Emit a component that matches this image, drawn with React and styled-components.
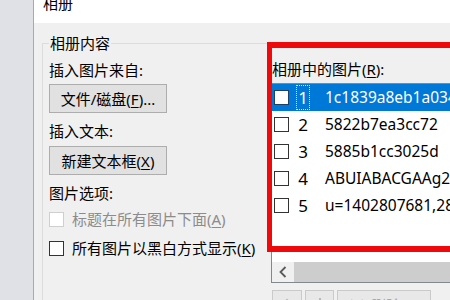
import React from "react";
import styled, { createGlobalStyle } from "styled-components";

const GlobalStyle = createGlobalStyle`
  html, body {
    margin: 0;
    padding: 0;
    background: #f0f0f0;
  }
  body {
    font-family: "Noto Sans", "Noto Sans CJK SC", sans-serif;
    color: #000;
  }
`;

const pictures = [
  "1c1839a8eb1a034c5b2",
  "5822b7ea3cc72",
  "5885b1cc3025d",
  "ABUIABACGAAg2",
  "u=1402807681,2844",
];

function Key({ children }) {
  return <Accel>{children}</Accel>;
}

function CheckRow({ label, disabled }) {
  return (
    <OptionRow $gap={disabled ? 8 : 11} $disabled={disabled}>
      <Box $disabled={disabled} />
      <span>{label}</span>
    </OptionRow>
  );
}

function PictureRow({ index, name, selected }) {
  return (
    <ListRow $selected={selected}>
      <RowBox $selected={selected} />
      <RowNumber $focused={selected}>{index}</RowNumber>
      <RowName>{name}</RowName>
    </ListRow>
  );
}

function App() {
  return (
    <>
      <GlobalStyle />
      <Screen>
        <Backdrop />
        <Dialog>
          <TitleBar>
            <Title>相册</Title>
          </TitleBar>
          <Body>
            <Group>
              <Legend>相册内容</Legend>
              <Columns>
                <LeftColumn>
                  <FieldLabel $gap={0}>插入图片来自:</FieldLabel>
                  <PushButton $gap={5}>
                    文件/磁盘(<Key>F</Key>)...
                  </PushButton>
                  <FieldLabel $gap={9}>插入文本:</FieldLabel>
                  <PushButton $gap={6}>
                    新建文本框(<Key>X</Key>)
                  </PushButton>
                  <FieldLabel $gap={9}>图片选项:</FieldLabel>
                  <CheckRow
                    disabled
                    label={<>标题在所有图片下面(<Key>A</Key>)</>}
                  />
                  <CheckRow label={<>所有图片以黑白方式显示(<Key>K</Key>)</>} />
                </LeftColumn>
                <RightColumn>
                  <ListLabel>
                    相册中的图片(<Key>R</Key>):
                  </ListLabel>
                  <ListBox>
                    <Rows>
                      {pictures.map((name, i) => (
                        <PictureRow
                          key={name}
                          index={i + 1}
                          name={name}
                          selected={i === 0}
                        />
                      ))}
                    </Rows>
                    <ScrollBar>
                      <ScrollArrow>
                        <svg width="8" height="12" viewBox="0 0 8 12">
                          <path
                            d="M6.5 1 L1.5 6 L6.5 11"
                            fill="none"
                            stroke="#5a5a5a"
                            strokeWidth="1.8"
                          />
                        </svg>
                      </ScrollArrow>
                      <ScrollThumb />
                    </ScrollBar>
                  </ListBox>
                  <ToolRow>
                    <ToolButton $width={30}>
                      <svg width="14" height="16" viewBox="0 0 14 16">
                        <path
                          d="M7 3 V15 M2 8 L7 3 L12 8"
                          fill="none"
                          stroke="#b9b9b9"
                          strokeWidth="2"
                        />
                      </svg>
                    </ToolButton>
                    <ToolButton $width={29}>
                      <svg width="14" height="16" viewBox="0 0 14 16">
                        <path
                          d="M7 1 V13 M2 8 L7 13 L12 8"
                          fill="none"
                          stroke="#b9b9b9"
                          strokeWidth="2"
                        />
                      </svg>
                    </ToolButton>
                    <ToolButton $width={94}>
                      <svg width="16" height="14" viewBox="0 0 16 14">
                        <path
                          d="M2 2 L14 12 M14 2 L2 12"
                          fill="none"
                          stroke="#b9b9b9"
                          strokeWidth="2.2"
                        />
                      </svg>
                      <span>删除(V)</span>
                    </ToolButton>
                  </ToolRow>
                </RightColumn>
              </Columns>
            </Group>
          </Body>
        </Dialog>
        <Annotation />
      </Screen>
    </>
  );
}

const Screen = styled.div`
  position: relative;
  display: flex;
  width: 450px;
  height: 300px;
  overflow: hidden;
  background: #f0f0f0;
`;

const Backdrop = styled.div`
  flex: 0 0 33px;
  background: #dfe1e6;
  border-right: 1px solid #a8aaae;
`;

const Dialog = styled.div`
  flex: 0 0 700px;
  display: flex;
  flex-direction: column;
  background: #f0f0f0;
`;

const TitleBar = styled.div`
  flex: 0 0 23px;
  padding-left: 9px;
  background: #fff;
  overflow: hidden;
`;

const Title = styled.div`
  margin-top: -6px;
  font-size: 15px;
  line-height: 18px;
`;

const Body = styled.div`
  flex: 0 0 auto;
  padding: 11px 0 0 8px;
`;

const Group = styled.fieldset`
  margin: 0;
  min-width: 0;
  height: 330px;
  padding: 9px 6px 0 6px;
  border: 1px solid #dcdcdc;
`;

const Legend = styled.legend`
  padding: 0 1px;
  font-size: 15px;
  line-height: 18px;
`;

const Columns = styled.div`
  display: flex;
  align-items: flex-start;
`;

const LeftColumn = styled.div`
  flex: 0 0 222px;
  display: flex;
  flex-direction: column;
  align-items: flex-start;
`;

const FieldLabel = styled.div`
  margin-top: ${(p) => p.$gap}px;
  font-size: 15px;
  line-height: 18px;
`;

const Accel = styled.span`
  text-decoration: underline;
  text-underline-offset: 2px;
`;

const PushButton = styled.div`
  box-sizing: border-box;
  margin-top: ${(p) => p.$gap}px;
  width: 118px;
  height: 29px;
  display: flex;
  align-items: center;
  justify-content: center;
  border: 1px solid #adadad;
  background: #e1e1e1;
  font-size: 15px;
  line-height: 18px;
`;

const OptionRow = styled.div`
  margin-top: ${(p) => p.$gap}px;
  display: flex;
  align-items: center;
  gap: 8px;
  height: 18px;
  font-size: 15px;
  line-height: 18px;
  white-space: nowrap;
  color: ${(p) => (p.$disabled ? "#8c8c8c" : "#000")};
`;

const Box = styled.span`
  box-sizing: border-box;
  width: 15px;
  height: 15px;
  background: #fff;
  border: 1px solid ${(p) => (p.$disabled ? "#cfcfcf" : "#333")};
`;

const RightColumn = styled.div`
  flex: 1;
  display: flex;
  flex-direction: column;
`;

const ListLabel = styled.div`
  padding-left: 1px;
  margin-top: -1px;
  font-size: 15px;
  line-height: 18px;
`;

const ListBox = styled.div`
  box-sizing: border-box;
  margin-top: 5px;
  height: 200px;
  display: flex;
  flex-direction: column;
  border: 1px solid #828790;
  background: #fff;
`;

const Rows = styled.div`
  flex: 1;
`;

const ListRow = styled.div`
  height: 27px;
  display: flex;
  align-items: center;
  padding-left: 2px;
  background: ${(p) => (p.$selected ? "#0078d7" : "transparent")};
  color: ${(p) => (p.$selected ? "#fff" : "#000")};
  white-space: nowrap;
`;

const RowBox = styled.span`
  box-sizing: border-box;
  flex: 0 0 15px;
  height: 15px;
  margin-right: 7px;
  background: #fff;
  border: 1px solid ${(p) => (p.$selected ? "#1e3f66" : "#333")};
`;

const RowNumber = styled.span`
  box-sizing: border-box;
  flex: 0 0 14px;
  height: 25px;
  margin-right: 15px;
  display: flex;
  align-items: center;
  justify-content: center;
  font-size: 17px;
  border: 1px dotted ${(p) => (p.$focused ? "#cfe3f7" : "transparent")};
`;

const RowName = styled.span`
  margin-top: -2px;
  font-size: 15.5px;
`;

const ScrollBar = styled.div`
  flex: 0 0 20px;
  display: flex;
  background: #f0f0f0;
`;

const ScrollArrow = styled.div`
  flex: 0 0 21px;
  display: flex;
  align-items: center;
  justify-content: center;
`;

const ScrollThumb = styled.div`
  flex: 1;
  margin-left: 1px;
  background: #cdcdcd;
`;

const ToolRow = styled.div`
  margin-top: 7px;
  padding-left: 1px;
  display: flex;
  gap: 3px;
`;

const ToolButton = styled.div`
  box-sizing: border-box;
  width: ${(p) => p.$width}px;
  height: 29px;
  display: flex;
  align-items: center;
  justify-content: center;
  gap: 6px;
  border: 1px solid #cacaca;
  background: #e8e8e8;
  color: #a8a8a8;
  font-size: 15px;
`;

const Annotation = styled.div`
  position: absolute;
  left: 267px;
  top: 42px;
  width: 260px;
  height: 210px;
  box-sizing: border-box;
  border: 6px solid #ee0a0a;
  border-left-width: 5px;
  pointer-events: none;
`;

export default App;
